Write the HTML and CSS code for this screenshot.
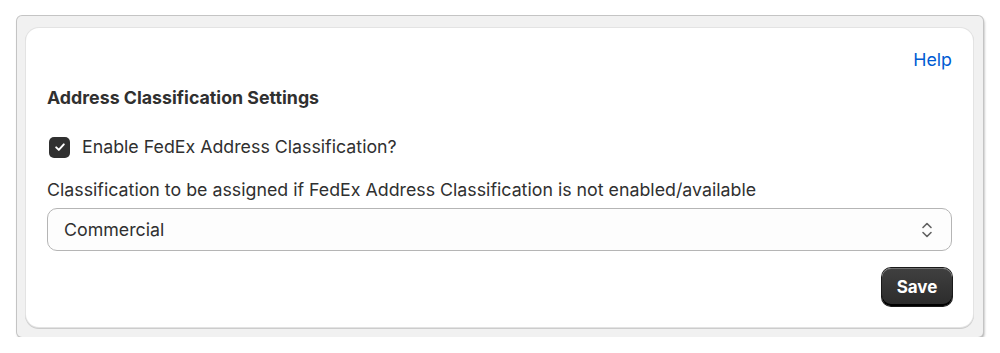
FILE: index.html
```html
<!DOCTYPE html>
<html lang="en">
<head>
    <meta charset="UTF-8">
    <meta name="viewport" content="width=device-width, initial-scale=1.0">
    <title>Address Classification Settings</title>
    <link rel="stylesheet" href="styles.css">
</head>
<body>
    <div class="frame">
        <div class="card">
            <div class="cardTop">
                <a class="helpLink" href="#">Help</a>
            </div>
            <h2 class="cardTitle">Address Classification Settings</h2>
            <label class="checkRow">
                <span class="checkBox">
                    <svg width="14" height="14" viewBox="0 0 14 14"><path d="M3.2 7.4 5.8 9.9 10.8 4.4" fill="none" stroke="#fff" stroke-width="2" stroke-linecap="round" stroke-linejoin="round"/></svg>
                </span>
                <span>Enable FedEx Address Classification?</span>
            </label>
            <div class="fieldLabel">Classification to be assigned if FedEx Address Classification is not enabled/available</div>
            <div class="selectBox">
                <span>Commercial</span>
                <svg class="selectIcon" width="14" height="20" viewBox="0 0 14 20"><path d="M3 7.5 7 3.5 11 7.5M3 12.5 7 16.5 11 12.5" fill="none" stroke="#616161" stroke-width="1.6" stroke-linecap="round" stroke-linejoin="round"/></svg>
            </div>
            <div class="actions">
                <button class="btnSave">Save</button>
            </div>
        </div>
    </div>
</body>
</html>
```

FILE: styles.css
```css
*
{
    box-sizing: border-box;
}
body
{
    margin: 0px;
    padding-top: 16px;
    background: #fff;
    font-family: Inter, "Noto Sans", sans-serif;
    color: #303030;
}
.frame
{
    margin: 0px 17px;
    height: 321px;
    padding: 12px 10px 10px 9px;
    background: #f1f1f1;
    border-radius: 5px;
    box-shadow: 0 0 0 1px #c4c4c4, 1px 2px 3px rgba(0, 0, 0, 0.4);
}
.card
{
    height: 299px;
    padding: 20px 21px;
    background: #fff;
    border-radius: 13px;
    box-shadow: 0 0 0 1px #e3e3e3, 0 1px 0 1px #cccccc;
}
.cardTop
{
    display: flex;
    justify-content: flex-end;
    height: 24px;
}
.helpLink
{
    font-size: 17.8px;
    line-height: 24px;
    color: #005bd3;
    text-decoration: none;
}
.cardTitle
{
    margin: 14px 0px 0px 0px;
    font-size: 17.8px;
    line-height: 24px;
    font-weight: 650;
}
.checkRow
{
    display: flex;
    align-items: center;
    gap: 12px;
    margin-top: 25px;
    margin-left: 2px;
    font-size: 17.8px;
    line-height: 24px;
}
.checkBox
{
    width: 21px;
    height: 21px;
    border-radius: 5px;
    background: #303030;
    display: flex;
    align-items: center;
    justify-content: center;
}
.fieldLabel
{
    margin-top: 19px;
    font-size: 17.8px;
    line-height: 24px;
}
.selectBox
{
    margin-top: 6px;
    height: 43px;
    display: flex;
    align-items: center;
    justify-content: space-between;
    padding: 0px 16px;
    border: 1px solid #b5b5b5;
    border-radius: 10px;
    background: #fdfdfd;
    font-size: 17.8px;
}
.selectIcon
{
    margin-right: 1px;
}
.actions
{
    display: flex;
    justify-content: flex-end;
    margin-top: 17px;
}
.btnSave
{
    width: 70px;
    height: 38px;
    border: 0px;
    border-radius: 9px;
    background: linear-gradient(#404040, #2b2b2b);
    box-shadow: inset 0 -2px 0 #000, inset 0 1px 0 rgba(255, 255, 255, 0.25), 0 0 0 1px #1a1a1a;
    color: #fff;
    font-family: Inter, "Noto Sans", sans-serif;
    font-size: 17px;
    font-weight: 700;
    cursor: pointer;
}
```
